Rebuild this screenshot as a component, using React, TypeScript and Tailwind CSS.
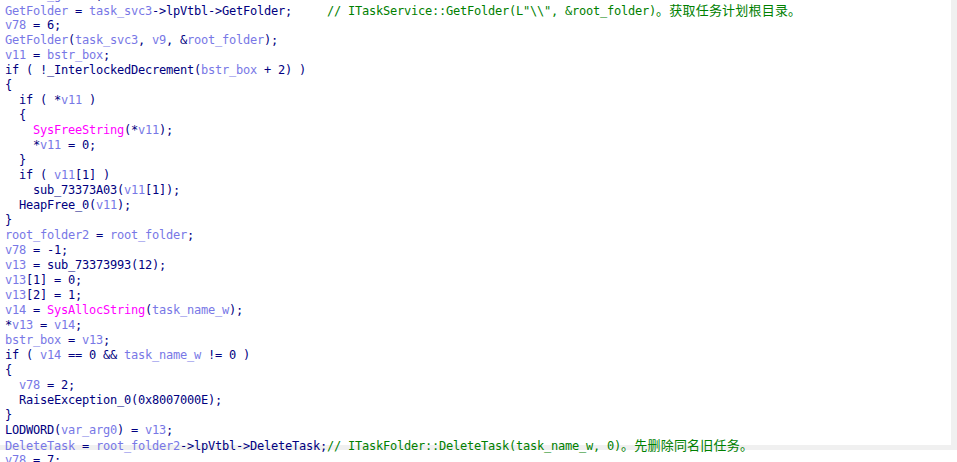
type Seg = [string, "n" | "v" | "f" | "c" | "z"];

const tone = {
  n: "text-[#000080]",
  v: "text-[#7878e6]",
  f: "text-[#ff00ff]",
  c: "text-[#008000]",
  z: "text-[#008000] text-[13px] tracking-[0.2px]",
};

const lines: Seg[][] = [
  [["v9", "v"], [" = (", "n"], ["_g", "v"], [")", "n"], ["vars", "v"], [";", "n"]],
  [["GetFolder", "v"], [" = ", "n"], ["task_svc3", "v"], ["->lpVtbl->GetFolder;", "n"], ["     // ITaskService::GetFolder(L\"\\\\\", &root_folder)", "c"], ["。获取任务计划根目录。", "z"]],
  [["v78", "v"], [" = 6;", "n"]],
  [["GetFolder", "v"], ["(", "n"], ["task_svc3", "v"], [", ", "n"], ["v9", "v"], [", &", "n"], ["root_folder", "v"], [");", "n"]],
  [["v11", "v"], [" = ", "n"], ["bstr_box", "v"], [";", "n"]],
  [["if ( !_InterlockedDecrement(", "n"], ["bstr_box", "v"], [" + 2) )", "n"]],
  [["{", "n"]],
  [["  if ( *", "n"], ["v11", "v"], [" )", "n"]],
  [["  {", "n"]],
  [["    ", "n"], ["SysFreeString", "f"], ["(*", "n"], ["v11", "v"], [");", "n"]],
  [["    *", "n"], ["v11", "v"], [" = 0;", "n"]],
  [["  }", "n"]],
  [["  if ( ", "n"], ["v11", "v"], ["[1] )", "n"]],
  [["    sub_73373A03(", "n"], ["v11", "v"], ["[1]);", "n"]],
  [["  HeapFree_0(", "n"], ["v11", "v"], [");", "n"]],
  [["}", "n"]],
  [["root_folder2", "v"], [" = ", "n"], ["root_folder", "v"], [";", "n"]],
  [["v78", "v"], [" = -1;", "n"]],
  [["v13", "v"], [" = sub_73373993(12);", "n"]],
  [["v13", "v"], ["[1] = 0;", "n"]],
  [["v13", "v"], ["[2] = 1;", "n"]],
  [["v14", "v"], [" = ", "n"], ["SysAllocString", "f"], ["(", "n"], ["task_name_w", "v"], [");", "n"]],
  [["*", "n"], ["v13", "v"], [" = ", "n"], ["v14", "v"], [";", "n"]],
  [["bstr_box", "v"], [" = ", "n"], ["v13", "v"], [";", "n"]],
  [["if ( ", "n"], ["v14", "v"], [" == 0 && ", "n"], ["task_name_w", "v"], [" != 0 )", "n"]],
  [["{", "n"]],
  [["  ", "n"], ["v78", "v"], [" = 2;", "n"]],
  [["  RaiseException_0(0x8007000E);", "n"]],
  [["}", "n"]],
  [["LODWORD(", "n"], ["var_arg0", "v"], [") = ", "n"], ["v13", "v"], [";", "n"]],
  [["DeleteTask", "v"], [" = ", "n"], ["root_folder2", "v"], ["->lpVtbl->DeleteTask;", "n"], ["// ITaskFolder::DeleteTask(task_name_w, 0)", "c"], ["。先删除同名旧任务。", "z"]],
  [["v78", "v"], [" = 7;", "n"]],
];

const App = () => {
  return (
    <div className="w-[957px] h-[462px] overflow-hidden bg-white">
      <div className="w-[957px] h-[462px] bg-white border-r-[6px] border-b-[5px] border-[#f0f0f0]">
        <div className="-mt-[12px] pl-[5px] text-[12px] leading-[15px] tracking-[-0.224px] whitespace-pre font-['DejaVu_Sans_Mono','Noto_Sans_CJK_SC',monospace]">
          {lines.map((line, i) => (
            <div key={i} className="h-[15px] leading-[15px]">
              {line.map(([text, kind], j) => (
                <span key={j} className={tone[kind]}>{text}</span>
              ))}
            </div>
          ))}
        </div>
      </div>
    </div>
  );
};

export default App;
